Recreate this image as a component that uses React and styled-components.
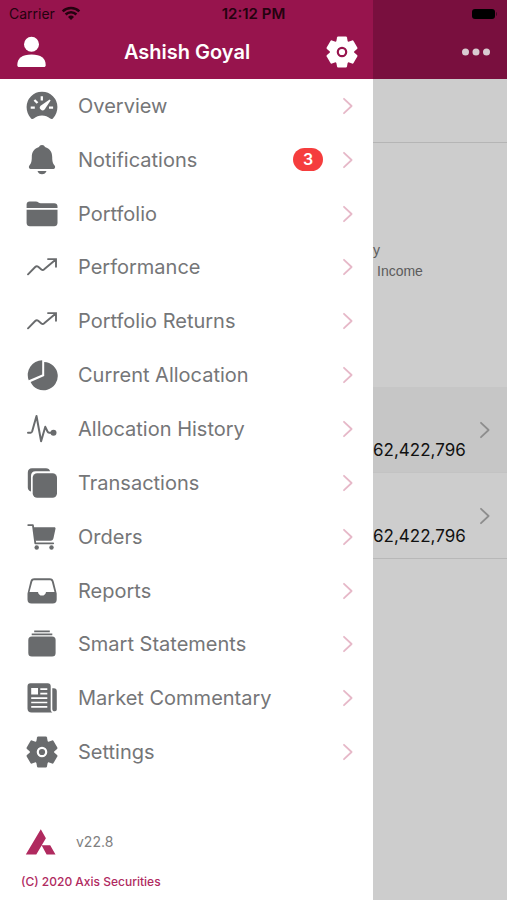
import React from "react";
import styled, { createGlobalStyle } from "styled-components";

const GlobalStyle = createGlobalStyle`
  *, *::before, *::after { box-sizing: border-box; }
  body {
    margin: 0;
    background: #ffffff;
    font-family: Inter, "Liberation Sans", sans-serif;
  }
  button { font: inherit; }
`;

const Screen = styled.div`
  display: grid;
  grid-template-columns: minmax(0, 373fr) minmax(0, 134fr);
  grid-template-rows: 27px 1fr;
  min-height: 100vh;
  overflow: hidden;
`;

const StatusBar = styled.div`
  grid-area: 1 / 1 / 2 / 3;
  z-index: 1;
  display: grid;
  grid-template-columns: 1fr auto 1fr;
  align-items: center;
  padding: 0 9px;
  color: #24020f;
  font-size: 14px;
  line-height: 27px;
`;

const Carrier = styled.span`
  display: flex;
  align-items: center;
  gap: 6px;
`;

const Clock = styled.time`
  font-size: 15px;
  font-weight: 600;
`;

const Battery = styled.svg`
  justify-self: end;
`;

const Drawer = styled.aside`
  grid-area: 1 / 1 / 3 / 2;
  display: flex;
  flex-direction: column;
  background: #ffffff;
`;

const Page = styled.main`
  grid-area: 1 / 2 / 3 / 3;
  min-width: 0;
  background: #cdcdcd;
`;

const Header = styled.header`
  display: flex;
  align-items: center;
  justify-content: ${(p) => (p.$dimmed ? "flex-end" : "space-between")};
  height: 79px;
  padding: 25px 15px 0 16px;
  background: ${(p) => (p.$dimmed ? "#790f3e" : "#97144d")};
`;

const Title = styled.h1`
  margin: 0;
  color: #ffffff;
  font-size: 20px;
  font-weight: 600;
  line-height: 24px;
`;

const IconButton = styled.button`
  display: flex;
  padding: 0;
  border: 0;
  background: none;
  color: ${(p) => (p.$dimmed ? "#d9cbd1" : "#ffffff")};
`;

const Menu = styled.ul`
  flex: 1;
  display: grid;
  grid-auto-rows: minmax(44px, 1fr);
  margin: 0;
  padding: 0;
  list-style: none;
`;

const MenuItem = styled.li`
  display: flex;
`;

const MenuLink = styled.a`
  flex: 1;
  display: flex;
  align-items: center;
  padding: 0 18px 0 26px;
  color: #696b6d;
  text-decoration: none;
`;

const Label = styled.span`
  flex: 1;
  margin-left: 20px;
  color: #757678;
  font-size: 20px;
  line-height: 24px;
  white-space: nowrap;
`;

const Badge = styled.span`
  width: 30px;
  margin-right: 18px;
  border-radius: 12px;
  background: #f53d3d;
  color: #ffffff;
  font-size: 16px;
  font-weight: 600;
  line-height: 23px;
  text-align: center;
`;

const Footer = styled.footer`
  height: 121px;
  padding: 49px 21px 0;
`;

const Version = styled.div`
  display: flex;
  align-items: center;
  gap: 20px;
  padding-left: 4px;
  color: #808080;
  font-size: 14px;
  line-height: 28px;
`;

const Copyright = styled.p`
  margin: 18px 0 0;
  color: #b02a5f;
  font-size: 12px;
  font-weight: 500;
  line-height: 16px;
`;

const Toolbar = styled.div`
  height: 64px;
  border-bottom: 1px solid #b5b5b5;
`;

const Summary = styled.section`
  height: 244px;
  padding-top: 97px;
  color: #5c5c5c;
  font-family: "Liberation Sans", sans-serif;
  font-size: 14px;
  line-height: 21px;
`;

const SummaryLine = styled.div`
  padding-left: ${(p) => (p.$indented ? "4px" : "0")};
`;

const Holding = styled.a`
  display: grid;
  grid-template-columns: 1fr auto;
  height: 86px;
  padding-right: 18px;
  border-bottom: 1px solid ${(p) => (p.$selected ? "#c3c3c3" : "#b8b8b8")};
  background: ${(p) => (p.$selected ? "#c6c6c6" : "#cdcdcd")};
  color: #111111;
  text-decoration: none;
`;

const Amount = styled.span`
  align-self: end;
  justify-self: end;
  margin-right: 12px;
  padding-bottom: 12px;
  font-size: 17px;
  line-height: 20px;
`;

const HoldingArrow = styled.span`
  display: flex;
  align-items: center;
  color: #8d8d8d;
`;

const Icon = ({ children, size = 32 }) => (
  <svg width={size} height={size} viewBox="0 0 32 32" fill="currentColor" aria-hidden="true">
    {children}
  </svg>
);

const Chevron = ({ color = "currentColor" }) => (
  <svg width="14" height="20" viewBox="0 0 14 20" fill="none" aria-hidden="true">
    <path d="M3 2.8 10.6 10 3 17.2" stroke={color} strokeWidth="1.8" strokeLinecap="round" strokeLinejoin="round" />
  </svg>
);

const gearTeeth = [0, 60, 120, 180, 240, 300];

const GearIcon = () => (
  <Icon>
    <path
      fillRule="evenodd"
      d="M16 3.900a12.100 12.100 0 1 0 0 24.200 12.100 12.100 0 1 0 0-24.200ZM16 10.700a5.300 5.300 0 1 1 0 10.600 5.300 5.300 0 1 1 0-10.600Z"
    />
    {gearTeeth.map((angle) => (
      <path
        key={angle}
        d="M12.200.5h7.600q1 0 1.200 1L21.800 6 19 8.500h-6L10.200 6l.8-4.500q.2-1 1.200-1Z"
        transform={`rotate(${angle} 16 16)`}
      />
    ))}
    <circle cx="16" cy="16" r="3.100" />
  </Icon>
);

const TrendIcon = () => (
  <Icon>
    <path
      d="M2 23.3 9.2 16c1-1 1.9-1.1 3-.2l3.2 2.7c1 .8 1.9.7 2.8-.2L29.5 8.700M22 8.100h8v7.700"
      fill="none"
      stroke="currentColor"
      strokeWidth="1.900"
      strokeLinejoin="miter"
      strokeLinecap="round"
    />
  </Icon>
);

const OverviewIcon = () => (
  <Icon>
    <path d="M16 1.7A15.3 15.3 0 0 0 .6 17c0 4 1.500 8 4.300 11.200.8 1 1.900 1.100 2.900.4 2.400-1.900 5-3 8.200-3s5.800 1.100 8.200 3c1 .7 2.100.6 2.900-.4C30 25 31.400 21 31.400 17A15.300 15.300 0 0 0 16 1.700Z" />
    <path d="M15.800 6.300v4.200M8.400 10l3.100 3M4.700 17.700h4.100M23 17.700h4.100" fill="none" stroke="#fff" strokeWidth="2.300" />
    <path d="m23.600 9.400 1 1-6 9a2.700 2.700 0 1 1-4-3.700Z" fill="#fff" />
  </Icon>
);

const BellIcon = () => (
  <Icon>
    <path d="M16 1c-1.600 0-2.500.9-3 2.100C8.200 4.500 5.800 8.200 5.800 13c0 4.800-.7 6.500-2.400 8.600-.9 1.200-.7 3.300 1 3.300h23.200c1.700 0 1.900-2.100 1-3.300-1.700-2.100-2.400-3.800-2.400-8.600 0-4.800-2.400-8.500-7.200-9.900C18.500 1.900 17.600 1 16 1ZM11.500 26.900h9c-.5 2-2.400 3.300-4.500 3.300s-4-1.300-4.500-3.300Z" />
  </Icon>
);

const FolderIcon = () => (
  <Icon>
    <path d="M.6 10V6.500C.6 4.600 1.800 3.500 3.600 3.500h6.200c1.200 0 2 .3 2.700.9.600.5 1.200.8 2.200.8h13.600c1.900 0 3.200 1.200 3.200 3V10ZM.6 11.700h30.900v13.200c0 2-1.400 3.300-3.300 3.300H3.900c-1.900 0-3.300-1.300-3.300-3.300Z" />
  </Icon>
);

const PieIcon = () => (
  <Icon>
    <path d="M16.200 1.300A14.700 14.700 0 0 0 2.700 21.200L16.200 15.400Z" />
    <path d="M18.200 2.900V17L4.600 22.900A14.200 14.200 0 1 0 18.200 2.900Z" />
  </Icon>
);

const PulseIcon = () => (
  <Icon>
    <path
      d="M2 19.700h2.700c.8 0 1.200-.5 1.500-1.400L10.500 3l4.600 25.300 4.200-14.500 2.200 4.700c.4.900.9 1.200 1.700 1.200H27"
      fill="none"
      stroke="currentColor"
      strokeWidth="2"
      strokeLinecap="round"
      strokeLinejoin="round"
    />
    <circle cx="27.500" cy="19.700" r="3" />
  </Icon>
);

const CardsIcon = () => (
  <Icon>
    <path d="M6 1.300h14c2.100 0 3.600 1.100 4.100 3H9.500C6.600 4.300 5 6 5 8.900v15.600c-2-.5-3.200-2-3.200-4V5.700C1.800 3 3.300 1.300 6 1.300Z" />
    <rect x="6.700" y="6.200" width="24.300" height="24.500" rx="4.500" />
  </Icon>
);

const CartIcon = () => (
  <Icon>
    <path
      d="M2.200 4.100h4.700L9.300 22.300h17.900"
      fill="none"
      stroke="currentColor"
      strokeWidth="1.800"
      strokeLinecap="round"
      strokeLinejoin="round"
    />
    <path d="M7.300 6.300h20.900c1 0 1.500.6 1.300 1.500l-2 9.300c-.3 1.600-1.200 2.600-2.900 2.600H9.300Z" />
    <circle cx="10.700" cy="26.500" r="2.200" />
    <circle cx="25.500" cy="26.500" r="2.200" />
  </Icon>
);

const TrayIcon = () => (
  <Icon>
    <path
      fillRule="evenodd"
      d="M8.400 3.300h15.200c2.400 0 3.700 1.100 4.200 3.500l2.900 11.800v6c0 2.700-1.300 4-4 4H5.500c-2.700 0-4-1.300-4-4v-6L4.300 6.800c.5-2.400 1.700-3.500 4.100-3.500Zm0 2c-1.200 0-1.900.5-2.200 1.700L3.500 16.900H12c.2 2 1.900 3.700 4 3.700s3.800-1.700 4-3.700h8.500L25.900 7c-.3-1.200-1-1.700-2.200-1.700Z"
    />
  </Icon>
);

const StackIcon = () => (
  <Icon>
    <path d="M8.200 2.500h15.600v1.800H8.200ZM5.700 5.400h20.600v1.900H5.700Z" />
    <rect x="2.300" y="8.500" width="27.300" height="20" rx="3.500" />
  </Icon>
);

const NewsIcon = () => (
  <Icon>
    <path d="M4.500 1.300h17.200c2 0 3 1.100 3 3v23.200c0 1.300.6 2.400 1.700 3H5.500c-2.500 0-4-1.500-4-4v-22c0-2 1-3.200 3-3.200ZM26.300 6.300h1.500c2 0 3 1 3 2.900v18c0 1.200-.7 2-1.900 2-1.700 0-2.600-.7-2.600-2.300Z" />
    <rect x="5.200" y="6" width="6.800" height="6.500" fill="#fff" />
    <path d="M14.300 7.100h7M14.300 11.600h7M5.200 16.100h16.100M5.200 20.500h16.100M5.200 24.900h16.100" stroke="#fff" strokeWidth="1.700" fill="none" />
  </Icon>
);

const PersonIcon = () => (
  <Icon>
    <circle cx="15.500" cy="8.200" r="7.500" />
    <path d="M1.300 29.200C1.300 22.200 6 18.600 15.500 18.600s14.200 3.600 14.200 10.600c0 1.100-.7 1.800-1.800 1.800H3.100c-1.100 0-1.800-.7-1.800-1.800Z" />
  </Icon>
);

const MoreIcon = () => (
  <Icon>
    <circle cx="5.500" cy="16" r="3.500" />
    <circle cx="16" cy="16" r="3.500" />
    <circle cx="26.500" cy="16" r="3.500" />
  </Icon>
);

const WifiIcon = () => (
  <svg width="20" height="15" viewBox="0 0 20 15" fill="none" stroke="currentColor" strokeWidth="2.500" aria-hidden="true">
    <path d="M1.700 5.300a11.800 11.800 0 0 1 16.600 0M4.600 8.500a7.700 7.700 0 0 1 10.800 0" />
    <path d="m10 14-3-3.100a4.300 4.300 0 0 1 6 0Z" fill="currentColor" stroke="none" />
  </svg>
);

const AxisLogo = () => (
  <svg width="31" height="26" viewBox="0 0 31 26" fill="#b02a5f" aria-label="Axis" role="img">
    <path d="M15.800.3 20.900 9.300 11.300 25.500H.8ZM16.600 16.200h8.600l5.300 9.300h-8.900Z" />
  </svg>
);

const items = [
  { label: "Overview", icon: OverviewIcon },
  { label: "Notifications", icon: BellIcon, badge: 3 },
  { label: "Portfolio", icon: FolderIcon },
  { label: "Performance", icon: TrendIcon },
  { label: "Portfolio Returns", icon: TrendIcon },
  { label: "Current Allocation", icon: PieIcon },
  { label: "Allocation History", icon: PulseIcon },
  { label: "Transactions", icon: CardsIcon },
  { label: "Orders", icon: CartIcon },
  { label: "Reports", icon: TrayIcon },
  { label: "Smart Statements", icon: StackIcon },
  { label: "Market Commentary", icon: NewsIcon },
  { label: "Settings", icon: GearIcon },
];

export default function App() {
  return (
    <>
      <GlobalStyle />
      <Screen>
        <StatusBar>
          <Carrier>
            Carrier
            <WifiIcon />
          </Carrier>
          <Clock>12:12 PM</Clock>
          <Battery width="27" height="12" viewBox="0 0 27 12" aria-label="Battery full" role="img">
            <rect x="1" y="1" width="23" height="10" rx="3" fill="#000" />
            <path d="M25 4c1.300.4 1.300 3.600 0 4Z" fill="#3d0a20" />
          </Battery>
        </StatusBar>

        <Drawer>
          <Header>
            <IconButton aria-label="Profile">
              <PersonIcon />
            </IconButton>
            <Title>Ashish Goyal</Title>
            <IconButton aria-label="Preferences">
              <GearIcon />
            </IconButton>
          </Header>
          <Menu>
            {items.map(({ label, icon: ItemIcon, badge }) => (
              <MenuItem key={label}>
                <MenuLink href="#">
                  <ItemIcon />
                  <Label>{label}</Label>
                  {badge && <Badge>{badge}</Badge>}
                  <Chevron color="#e6b8c8" />
                </MenuLink>
              </MenuItem>
            ))}
          </Menu>
          <Footer>
            <Version>
              <AxisLogo />
              v22.8
            </Version>
            <Copyright>(C) 2020 Axis Securities</Copyright>
          </Footer>
        </Drawer>

        <Page>
          <Header $dimmed>
            <IconButton $dimmed aria-label="More">
              <MoreIcon />
            </IconButton>
          </Header>
          <Toolbar />
          <Summary>
            <SummaryLine>y</SummaryLine>
            <SummaryLine $indented>Income</SummaryLine>
          </Summary>
          <Holding href="#" $selected>
            <Amount>62,422,796</Amount>
            <HoldingArrow>
              <Chevron />
            </HoldingArrow>
          </Holding>
          <Holding href="#">
            <Amount>62,422,796</Amount>
            <HoldingArrow>
              <Chevron />
            </HoldingArrow>
          </Holding>
        </Page>
      </Screen>
    </>
  );
}
